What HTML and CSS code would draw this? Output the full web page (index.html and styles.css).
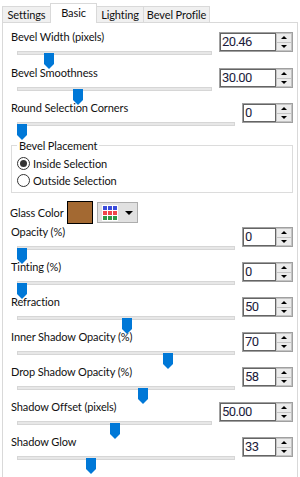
FILE: index.html
```html
<!DOCTYPE html>
<html lang="en">
<head>
  <meta charset="UTF-8" />
  <meta name="viewport" content="width=device-width, initial-scale=1.0" />
  <title>Glass Bevel</title>
  <link rel="stylesheet" href="styles.css">
</head>
<body>

<div class="window">
  <!-- Tab strip -->
  <div class="tabs">
    <div class="tab tab-settings">Settings</div>
    <div class="tab tab-basic active">Basic</div>
    <div class="tab tab-lighting">Lighting</div>
    <div class="tab tab-profile">Bevel Profile</div>
  </div>

  <!-- Basic page -->
  <div class="page">
    <div class="row first">
      <div class="field">
        <div class="label">Bevel Width (pixels)</div>
        <div class="slider"><div class="track"></div><div class="thumb" style="left:33px"></div></div>
      </div>
      <div class="spin wide"><div class="spin-value">20.46</div><div class="spin-btns"><span class="spin-btn up"></span><span class="spin-btn down"></span></div></div>
    </div>

    <div class="row">
      <div class="field">
        <div class="label">Bevel Smoothness</div>
        <div class="slider"><div class="track"></div><div class="thumb" style="left:62px"></div></div>
      </div>
      <div class="spin wide"><div class="spin-value">30.00</div><div class="spin-btns"><span class="spin-btn up"></span><span class="spin-btn down"></span></div></div>
    </div>

    <div class="row">
      <div class="field">
        <div class="label">Round Selection Corners</div>
        <div class="slider"><div class="track"></div><div class="thumb" style="left:6px"></div></div>
      </div>
      <div class="spin"><div class="spin-value">0</div><div class="spin-btns"><span class="spin-btn up"></span><span class="spin-btn down"></span></div></div>
    </div>

    <fieldset class="group">
      <legend>Bevel Placement</legend>
      <label class="radio"><span class="dot checked"></span>Inside Selection</label>
      <label class="radio"><span class="dot"></span>Outside Selection</label>
    </fieldset>

    <div class="color-row">
      <div class="color-label">Glass Color</div>
      <div class="swatch"></div>
      <div class="picker">
        <div class="grid">
          <i class="c-blue"></i><i class="c-blue"></i><i class="c-blue"></i>
          <i class="c-red"></i><i class="c-red"></i><i class="c-red"></i>
          <i class="c-green"></i><i class="c-green"></i><i class="c-green"></i>
        </div>
        <span class="caret"></span>
      </div>
    </div>

    <div class="row">
      <div class="field">
        <div class="label">Opacity (%)</div>
        <div class="slider"><div class="track"></div><div class="thumb" style="left:6px"></div></div>
      </div>
      <div class="spin"><div class="spin-value">0</div><div class="spin-btns"><span class="spin-btn up"></span><span class="spin-btn down"></span></div></div>
    </div>

    <div class="row">
      <div class="field">
        <div class="label">Tinting (%)</div>
        <div class="slider"><div class="track"></div><div class="thumb" style="left:6px"></div></div>
      </div>
      <div class="spin"><div class="spin-value">0</div><div class="spin-btns"><span class="spin-btn up"></span><span class="spin-btn down"></span></div></div>
    </div>

    <div class="row">
      <div class="field">
        <div class="label">Refraction</div>
        <div class="slider"><div class="track"></div><div class="thumb" style="left:111px"></div></div>
      </div>
      <div class="spin"><div class="spin-value">50</div><div class="spin-btns"><span class="spin-btn up"></span><span class="spin-btn down"></span></div></div>
    </div>

    <div class="row">
      <div class="field">
        <div class="label">Inner Shadow Opacity (%)</div>
        <div class="slider"><div class="track"></div><div class="thumb" style="left:152px"></div></div>
      </div>
      <div class="spin"><div class="spin-value">70</div><div class="spin-btns"><span class="spin-btn up"></span><span class="spin-btn down"></span></div></div>
    </div>

    <div class="row">
      <div class="field">
        <div class="label">Drop Shadow Opacity (%)</div>
        <div class="slider"><div class="track"></div><div class="thumb" style="left:127px"></div></div>
      </div>
      <div class="spin"><div class="spin-value">58</div><div class="spin-btns"><span class="spin-btn up"></span><span class="spin-btn down"></span></div></div>
    </div>

    <div class="row">
      <div class="field">
        <div class="label">Shadow Offset (pixels)</div>
        <div class="slider"><div class="track"></div><div class="thumb" style="left:99px"></div></div>
      </div>
      <div class="spin wide"><div class="spin-value">50.00</div><div class="spin-btns"><span class="spin-btn up"></span><span class="spin-btn down"></span></div></div>
    </div>

    <div class="row">
      <div class="field">
        <div class="label">Shadow Glow</div>
        <div class="slider"><div class="track"></div><div class="thumb" style="left:75px"></div></div>
      </div>
      <div class="spin"><div class="spin-value">33</div><div class="spin-btns"><span class="spin-btn up"></span><span class="spin-btn down"></span></div></div>
    </div>
  </div>
</div>

</body>
</html>
```

FILE: styles.css
```css
body {
  margin: 0;
  background: #fff;
  font-family: Lato, "Liberation Sans", sans-serif;
  font-size: 11px;
  letter-spacing: -0.1px;
  color: #111;
  overflow: hidden;
}

.window {
  padding: 0 2px;
}

/* tabs */

.tabs {
  display: flex;
  align-items: flex-end;
  height: 22px;
}

.tab {
  box-sizing: border-box;
  height: 16px;
  padding-top: 1px;
  line-height: 13px;
  text-align: center;
  background: #f0f0f0;
  border: 1px solid #d9d9d9;
  border-bottom: none;
  margin-left: -1px;
  white-space: nowrap;
}

.tab-settings { width: 49px; margin-left: 0; }
.tab-basic { width: 47px; }
.tab-lighting { width: 48px; }
.tab-profile { width: 67px; }

.tab.active {
  position: relative;
  z-index: 1;
  height: 20px;
  margin-bottom: -1px;
  padding-top: 2px;
  background: #fff;
}

/* page */

.page {
  box-sizing: border-box;
  height: 455px;
  padding: 7px 4px 0 8px;
  border: 1px solid #d9d9d9;
  border-bottom: none;
  overflow: hidden;
}

.row {
  display: flex;
  height: 35px;
}

.row.first {
  height: 36px;
}

.field {
  flex: 1;
  margin-right: 7px;
}

.label {
  line-height: 14px;
  white-space: nowrap;
}

.slider {
  position: relative;
  height: 21px;
}

.track {
  box-sizing: border-box;
  height: 4px;
  margin: 7px 0 0 6px;
  background: #e7e7e7;
  border: 1px solid #d6d6d6;
}

.thumb {
  position: absolute;
  top: 2px;
  width: 10px;
  height: 16px;
  background: #0078d7;
  clip-path: polygon(0 0, 100% 0, 100% 69%, 50% 100%, 0 69%);
}

/* numeric up/down */

.spin {
  box-sizing: border-box;
  display: flex;
  width: 51px;
  height: 20px;
  margin-top: 2px;
  border: 1px solid #a0a0a0;
  background: #fff;
}

.spin.wide {
  width: 74px;
}

.spin-value {
  flex: 1;
  border: 1px solid #646464;
  padding-left: 1px;
  font-family: Roboto, "Liberation Sans", sans-serif;
  font-size: 13px;
  letter-spacing: -0.6px;
  line-height: 16px;
  color: #1c1c3c;
}

.spin-btns {
  display: flex;
  flex-direction: column;
  width: 16px;
}

.spin-btn {
  box-sizing: border-box;
  flex: 1;
  display: flex;
  align-items: center;
  justify-content: center;
  background: #ececec;
  border: 1px solid #c4c4c4;
}

.spin-btn.up { border-bottom: none; }

.spin-btn::before {
  content: '';
  border-left: 3px solid transparent;
  border-right: 3px solid transparent;
}

.spin-btn.up::before { border-bottom: 3px solid #000; }
.spin-btn.down::before { border-top: 3px solid #000; }

/* group box */

.group {
  margin: 2px 0 0;
  padding: 2px 5px 3px;
  border: 1px solid #dcdcdc;
  min-width: 0;
}

.group legend {
  padding: 0 2px;
  line-height: 15px;
}

.radio {
  display: flex;
  align-items: center;
  gap: 3px;
  height: 17px;
}

.dot {
  box-sizing: border-box;
  display: flex;
  align-items: center;
  justify-content: center;
  width: 13px;
  height: 13px;
  border: 1px solid #333;
  border-radius: 50%;
  background: #fff;
}

.dot.checked::after {
  content: '';
  width: 7px;
  height: 7px;
  border-radius: 50%;
  background: #333;
}

/* glass color */

.color-row {
  display: flex;
  align-items: center;
  height: 23px;
  margin: 8px 0 1px;
}

.color-label {
  width: 57px;
  margin-left: -1px;
  white-space: nowrap;
}

.swatch {
  box-sizing: border-box;
  width: 26px;
  height: 23px;
  background: #a36932;
  border: 1px solid #000;
}

.picker {
  box-sizing: border-box;
  display: flex;
  align-items: center;
  gap: 7px;
  width: 41px;
  height: 21px;
  margin-left: 4px;
  padding-left: 4px;
  background: #e1e1e1;
  border: 1px solid #adadad;
}

.grid {
  display: grid;
  grid-template-columns: repeat(3, 4px);
  grid-auto-rows: 4px;
  gap: 1px;
  padding: 1px;
  background: #fff;
}

.c-blue { background: #3b4cdb; }
.c-red { background: #f0464a; }
.c-green { background: #2e9a46; }

.caret {
  border-left: 4px solid transparent;
  border-right: 4px solid transparent;
  border-top: 4px solid #000;
}
```
